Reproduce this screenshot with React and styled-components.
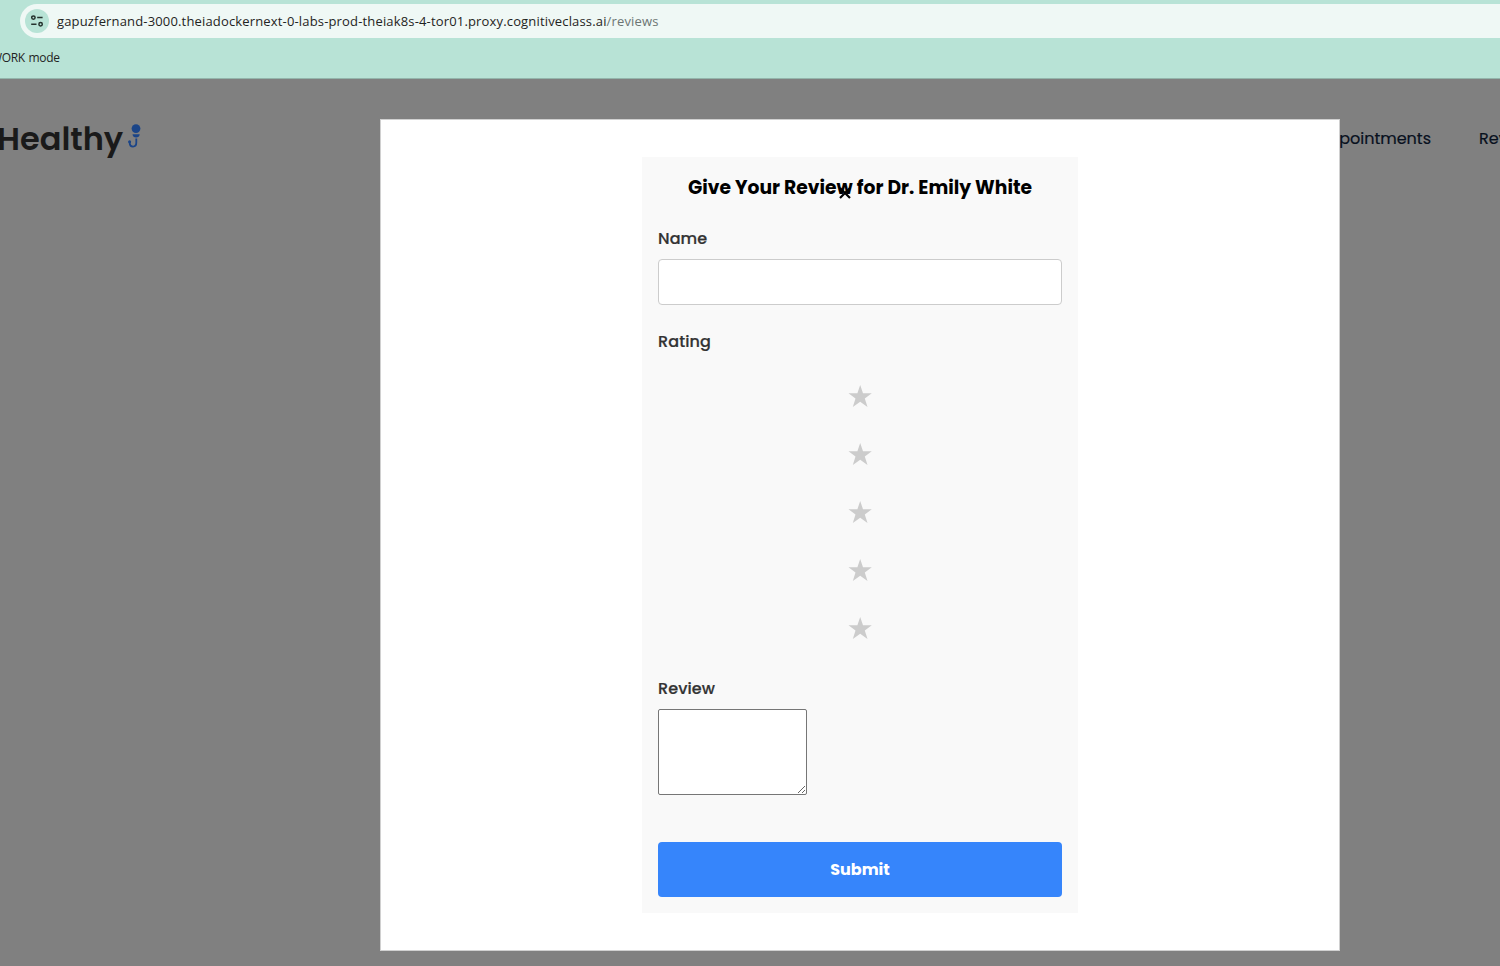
import React from 'react';
import styled, { createGlobalStyle } from 'styled-components';

const GlobalStyle = createGlobalStyle`
  * { box-sizing: border-box; }
  body {
    margin: 0;
    overflow: hidden;
    font-family: Poppins, Inter, "Liberation Sans", sans-serif;
    font-feature-settings: "cv11";
  }
`;

const Page = styled.div`
  display: flex;
  flex-direction: column;
  width: 100%;
  height: 100vh;
  overflow: hidden;
  background: #808080;
`;

const BrowserBar = styled.div`
  display: flex;
  flex-direction: column;
  flex: none;
  height: 79px;
  padding-top: 4px;
  background: #b8e3d6;
  border-bottom: 1px solid #93b5ab;
  font-family: "Segoe UI", "Open Sans", sans-serif;
  white-space: nowrap;
`;

const AddressBar = styled.div`
  display: flex;
  align-items: center;
  height: 34px;
  margin-left: 20px;
  padding-left: 5px;
  gap: 8px;
  border-radius: 17px 0 0 17px;
  background: #eff8f5;
`;

const SiteButton = styled.span`
  display: flex;
  align-items: center;
  justify-content: center;
  width: 24px;
  height: 24px;
  border-radius: 50%;
  background: #b8e3d6;
`;

const Address = styled.span`
  font-size: 13px;
  line-height: 18px;
  letter-spacing: 0.16px;
  color: #1f2423;
`;

const AddressPath = styled.span`
  color: #6c7573;
`;

const Bookmarks = styled.div`
  display: flex;
  align-items: center;
  height: 38px;
  margin-left: -9px;
  font-size: 12px;
  letter-spacing: -0.35px;
  word-spacing: 1px;
  color: #1f2423;
`;

const SiteHeader = styled.header`
  display: flex;
  justify-content: space-between;
  align-items: center;
  height: 119px;
  flex: none;
  white-space: nowrap;
`;

const Brand = styled.div`
  display: flex;
  align-items: center;
  gap: 4px;
  margin-left: -3px;
  font-size: 32px;
  font-weight: 600;
  color: #1a1a1a;
`;

const Nav = styled.nav`
  display: flex;
  gap: 48px;
  margin-right: -43px;
  font-size: 16px;
  color: #08101e;
  -webkit-text-stroke: 0.2px #08101e;
`;

const Modal = styled.section`
  position: absolute;
  left: 380px;
  top: 119px;
  width: 960px;
  height: 832px;
  padding: 37px 0;
  border: 1px solid #d0d0d0;
  background: #fff;
  display: flex;
  justify-content: center;
`;

const Form = styled.div`
  position: relative;
  width: 436px;
  height: 756px;
  padding: 16px;
  background: #f9f9f9;
  display: flex;
  flex-direction: column;
`;

const Title = styled.h2`
  margin: 0 0 36px;
  line-height: 29px;
  font-size: 18.72px;
  font-weight: 700;
  letter-spacing: 0.01px;
  text-align: center;
  white-space: nowrap;
  color: #000;
`;

const CloseMark = styled.svg`
  position: absolute;
  left: 197px;
  top: 30px;
`;

const Label = styled.label`
  line-height: 24px;
  margin-top: ${(p) => p.$top || 0}px;
  font-size: 16px;
  font-weight: 500;
  letter-spacing: 0.1px;
  color: #333;
  -webkit-text-stroke: 0.2px #333;
`;

const NameInput = styled.input`
  height: 46px;
  margin: 0;
  border: 1px solid #ccc;
  border-radius: 4px;
  background: #fff;
`;

const Stars = styled.div`
  display: flex;
  flex-direction: column;
  align-items: center;
  margin-top: 13px;
`;

const StarSlot = styled.span`
  display: flex;
  align-items: center;
  height: 58px;
`;

const ReviewBox = styled.textarea`
  width: 149px;
  height: 86px;
  margin: 0;
  border: 1px solid #767676;
  border-radius: 2px;
  background: #fff;
`;

const Submit = styled.button`
  height: 55px;
  margin-top: auto;
  border: 0;
  border-radius: 4px;
  background: #3685fb;
  color: #fff;
  font-family: inherit;
  font-feature-settings: inherit;
  font-size: 16px;
  font-weight: 700;
`;

const Field = styled.div`
  display: flex;
  flex-direction: column;
  align-items: ${(p) => (p.$start ? 'flex-start' : 'stretch')};
  gap: 8px;
  margin-top: ${(p) => p.$top || 0}px;
`;

const TuneIcon = () => (
  <svg width="14" height="14" viewBox="0 0 14 14" fill="none" stroke="#24312d" strokeWidth="1.5">
    <circle cx="3.4" cy="3.6" r="1.7" />
    <path d="M7.2 3.6h5.4M1.2 10.2h5.3" />
    <circle cx="10.6" cy="10.2" r="1.7" />
  </svg>
);

const BrandMark = styled.svg`
  margin-bottom: 5px;
`;

const BrandIcon = () => (
  <BrandMark width="14" height="26" viewBox="0 0 14 26">
    <circle cx="9" cy="5.6" r="4.4" fill="#1b4588" />
    <path d="M5.5 11.2h7.2c-.2 2.2-1.6 3.2-3.6 3.2s-3.4-1-3.6-3.2z" fill="#1b4588" />
    <path d="M9.3 15.5v4.3c0 5-6.4 4.8-6.6.4v-1.7" fill="none" stroke="#1b4588" strokeWidth="1.8" />
    <circle cx="2.6" cy="18.8" r="1.5" fill="#1b4588" />
  </BrandMark>
);

const Star = () => (
  <svg width="24" height="24" viewBox="0 0 24 24">
    <path d="M12.2 1L15 9.2H23.8L16.8 14.5L19.5 23L12.2 17.8L4.8 23L7.5 14.5L.5 9.2H9.4Z" fill="#ccc" />
  </svg>
);

export default function App() {
  return (
    <Page>
      <GlobalStyle />
      <BrowserBar>
        <AddressBar>
          <SiteButton><TuneIcon /></SiteButton>
          <Address>
            gapuzfernand-3000.theiadockernext-0-labs-prod-theiak8s-4-tor01.proxy.cognitiveclass.ai
            <AddressPath>/reviews</AddressPath>
          </Address>
        </AddressBar>
        <Bookmarks>WORK mode</Bookmarks>
      </BrowserBar>
      <SiteHeader>
        <Brand>Healthy<BrandIcon /></Brand>
        <Nav><span>Appointments</span><span>Reviews</span></Nav>
      </SiteHeader>
      <Modal>
        <Form>
          <Title>Give Your Review for Dr. Emily White</Title>
          <CloseMark width="12" height="12" viewBox="0 0 12 12" stroke="#000" strokeWidth="2.2">
            <path d="M1 1l10 10M11 1L1 11" />
          </CloseMark>
          <Field $top={-11}>
            <Label>Name</Label>
            <NameInput />
          </Field>
          <Label $top={25}>Rating</Label>
          <Stars>
            {[1, 2, 3, 4, 5].map((n) => <StarSlot key={n}><Star /></StarSlot>)}
          </Stars>
          <Field $top={20} $start>
            <Label>Review</Label>
            <ReviewBox />
          </Field>
          <Submit>Submit</Submit>
        </Form>
      </Modal>
    </Page>
  );
}
